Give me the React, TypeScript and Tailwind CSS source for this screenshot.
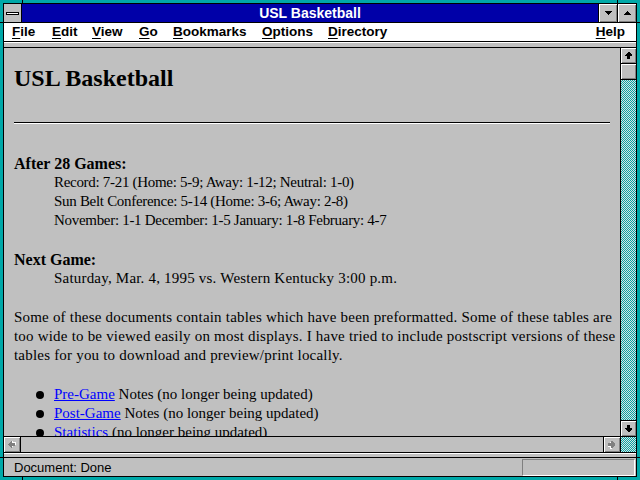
import React from 'react'

const RAISED = 'bg-[#c0c0c0] shadow-[inset_1px_1px_0_#ffffff,inset_-1px_-1px_0_#808080]'
const DITHER =
  'bg-[conic-gradient(#00a8a8_25%,#e0e0e0_0_50%,#00a8a8_0_75%,#e0e0e0_0)] bg-[length:2px_2px]'

function Arrow({ dir, disabled }: { dir: 'up' | 'down' | 'left' | 'right'; disabled?: boolean }) {
  const rot = { up: 0, right: 90, down: 180, left: 270 }[dir]
  const pts = '3,0 4,0 7,3 7,4 5,4 5,7 2,7 2,4 0,4 0,3'
  return (
    <svg width="8" height="8" viewBox="0 0 8 8" shapeRendering="crispEdges">
      <g transform={`rotate(${rot} 3.5 3.5)`}>
        {disabled && <polygon points={pts} fill="#ffffff" transform="translate(1 1)" />}
        <polygon points={pts} fill={disabled ? '#808080' : '#000000'} />
      </g>
    </svg>
  )
}

function Tri({ up }: { up?: boolean }) {
  return (
    <svg width="7" height="4" viewBox="0 0 7 4" shapeRendering="crispEdges">
      <polygon points={up ? '3.5,0 7,4 0,4' : '0,0 7,0 3.5,4'} fill="#000000" />
    </svg>
  )
}

const MENUS = [
  { k: 'F', r: 'ile', w: 'w-[40px]' },
  { k: 'E', r: 'dit', w: 'w-[40px]' },
  { k: 'V', r: 'iew', w: 'w-[47px]' },
  { k: 'G', r: 'o', w: 'w-[34px]' },
  { k: 'B', r: 'ookmarks', w: 'w-[89px]' },
  { k: 'O', r: 'ptions', w: 'w-[66px]' },
  { k: 'D', r: 'irectory', w: 'w-[90px]' },
]

export default function App() {
  return (
    <div className="relative w-[640px] h-[480px] bg-[#00a8a8] p-[3px] font-['Liberation_Sans',Arial,sans-serif] select-none">
      {/* frame corner marks */}
      <div className="absolute left-[22px] top-0 w-px h-[3px] bg-black" />
      <div className="absolute left-[617px] top-0 w-px h-[3px] bg-black" />
      <div className="absolute left-[22px] bottom-0 w-px h-[3px] bg-black" />
      <div className="absolute left-[617px] bottom-0 w-px h-[3px] bg-black" />
      <div className="absolute left-0 top-[22px] w-[3px] h-px bg-black" />
      <div className="absolute right-0 top-[22px] w-[3px] h-px bg-black" />
      <div className="absolute left-0 top-[457px] w-[3px] h-px bg-black" />
      <div className="absolute right-0 top-[457px] w-[3px] h-px bg-black" />

      <div className="h-full border border-black flex flex-col bg-[#c0c0c0]">
        {/* Title bar */}
        <div className="h-[19px] shrink-0 flex border-b border-black bg-[#0000a8]">
          <div className="w-[18px] border-r border-black bg-[#c0c0c0] flex items-center justify-center">
            <div className="w-[13px] h-[3px] bg-white border border-black" />
          </div>
          <div className="flex-1 flex items-center justify-center text-white font-bold text-[14px] leading-none">
            USL Basketball
          </div>
          <div className={`w-[19px] border-l border-black flex items-center justify-center ${RAISED}`}>
            <Tri />
          </div>
          <div className={`w-[19px] border-l border-black flex items-center justify-center ${RAISED}`}>
            <Tri up />
          </div>
        </div>

        {/* Menu bar */}
        <div className="h-[19px] shrink-0 flex items-center bg-white border-b border-black text-[13.5px] font-bold text-black pl-[8px] pr-[11px]">
          {MENUS.map((m) => (
            <span key={m.k} className={m.w}>
              <span className="underline underline-offset-2">{m.k}</span>
              {m.r}
            </span>
          ))}
          <span className="ml-auto">
            <span className="underline underline-offset-2">H</span>elp
          </span>
        </div>

        {/* toolbar strip */}
        <div className="h-[6px] shrink-0 border-t border-white border-b border-b-black bg-[#c0c0c0]" />

        {/* Document area */}
        <div className="h-[388px] shrink-0 flex">
          <div className="w-[616px] overflow-hidden pl-[10px] pr-[10px] text-black font-['Liberation_Serif','Times_New_Roman',serif] text-[15px] leading-[19px]">
            <h1 className="mt-[18px] text-[24px] leading-[24px] font-bold">USL Basketball</h1>
            <div className="mt-[32px] h-[2px] border-t border-black border-b border-b-white" />

            <div className="mt-[30px]">
              <div className="font-bold text-[16px]">After 28 Games:</div>
              <div className="pl-[40px] whitespace-nowrap tracking-[-0.3px]">
                <div>Record: 7-21 (Home: 5-9; Away: 1-12; Neutral: 1-0)</div>
                <div>Sun Belt Conference: 5-14 (Home: 3-6; Away: 2-8)</div>
                <div>November: 1-1 December: 1-5 January: 1-8 February: 4-7</div>
              </div>
            </div>

            <div className="mt-[20px]">
              <div className="font-bold text-[16px]">Next Game:</div>
              <div className="pl-[40px] whitespace-nowrap tracking-[0.2px]">
                Saturday, Mar. 4, 1995 vs. Western Kentucky 3:00 p.m.
              </div>
            </div>

            <p className="mt-[20px] whitespace-nowrap tracking-[0.2px]">
              Some of these documents contain tables which have been preformatted. Some of these tables are
              <br />
              too wide to be viewed easily on most displays. I have tried to include postscript versions of these
              <br />
              tables for you to download and preview/print locally.
            </p>

            <ul className="mt-[20px] whitespace-nowrap">
              {[
                ['Pre-Game', ' Notes (no longer being updated)'],
                ['Post-Game', ' Notes (no longer being updated)'],
                ['Statistics', ' (no longer being updated)'],
              ].map(([link, rest]) => (
                <li key={link} className="flex items-center">
                  <span className="w-[40px] flex justify-end pr-[10px]">
                    <span className="w-[8px] h-[8px] rounded-full bg-black" />
                  </span>
                  <span>
                    <span className="text-[#0000ff] underline underline-offset-1">{link}</span>
                    {rest}
                  </span>
                </li>
              ))}
            </ul>
          </div>

          {/* vertical scrollbar */}
          <div className="flex-1 border-l border-black flex flex-col">
            <div className={`h-[16px] border-b border-black flex items-center justify-center ${RAISED}`}>
              <Arrow dir="up" />
            </div>
            <div className={`h-[16px] border-b border-black ${RAISED}`} />
            <div className={`flex-1 ${DITHER}`} />
            <div className={`h-[16px] border-t border-black flex items-center justify-center ${RAISED}`}>
              <Arrow dir="down" />
            </div>
          </div>
        </div>

        {/* horizontal scrollbar */}
        <div className="h-[17px] shrink-0 flex border-t border-black border-b">
          <div className={`w-[17px] border-r border-black flex items-center justify-center ${RAISED}`}>
            <Arrow dir="left" disabled />
          </div>
          <div className="flex-1 bg-[#c0c0c0]" />
          <div className={`w-[17px] border-l border-black flex items-center justify-center ${RAISED}`}>
            <Arrow dir="right" disabled />
          </div>
          <div className={`w-[16px] border-l border-black ${DITHER}`} />
        </div>

        {/* strip */}
        <div className="h-[5px] shrink-0 border-t border-white border-b border-b-black bg-[#c0c0c0]" />

        {/* status bar */}
        <div className="flex-1 flex items-center pl-[10px] pr-px text-[13px] text-black">
          <span>Document: Done</span>
          <div className="ml-auto w-[113px] h-[17px] border-t border-l border-[#808080] border-b-white border-r-white border-b border-r" />
        </div>
      </div>
    </div>
  )
}
